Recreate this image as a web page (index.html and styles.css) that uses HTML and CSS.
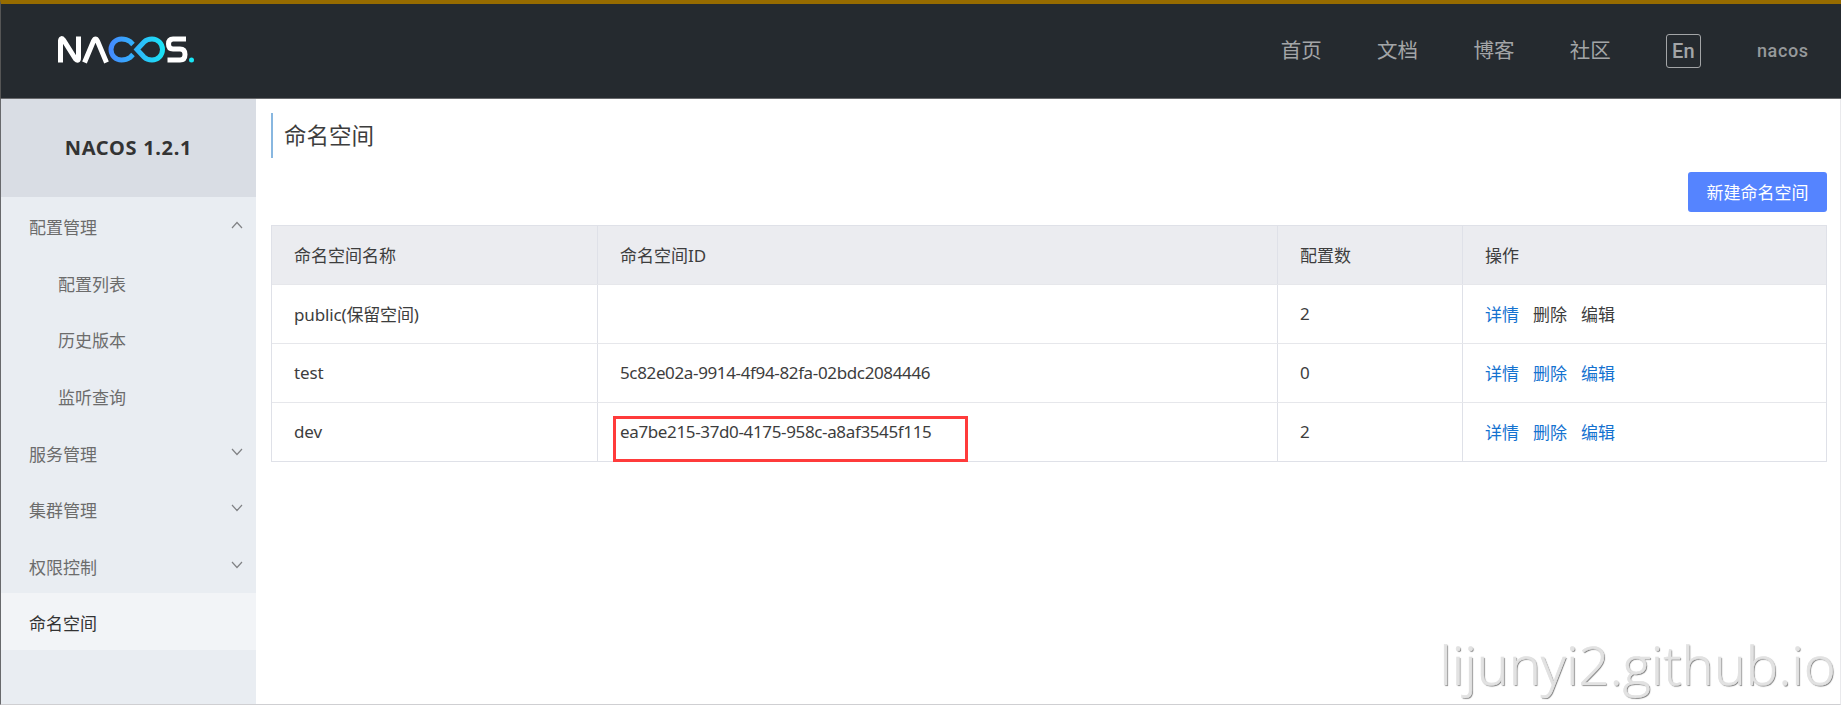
FILE: index.html
```html
<!DOCTYPE html>
<html lang="zh-CN">
<head>
<meta charset="utf-8">
<title>Nacos</title>
<link rel="stylesheet" href="styles.css">
</head>
<body>
<header class="header">
  <svg class="logo" width="138" height="28" viewBox="0 0 138 28" fill="none">
    <defs><linearGradient id="g" x1="50" y1="0" x2="107" y2="0" gradientUnits="userSpaceOnUse"><stop stop-color="#4687ff"/><stop offset="1" stop-color="#19e5f5"/></linearGradient></defs>
    <g stroke="#fff" stroke-width="5">
      <path d="M2.500 26.500V4.500Q3 1 5.500 4L17.500 23Q20.500 26 20.500 22V.500"/>
      <path d="M26.500 26.500L35.500 5Q37.500 1 39.500 5L48.500 26.500"/>
      <path d="M128 3H115Q110.500 3 110.500 8T115 13H122Q127 13 127 18.500T122 24H109.500"/>
    </g>
    <path stroke="url(#g)" stroke-width="5" d="M75 8.500L72 5.500Q68.500 3 63.500 3A10.500 10.500 0 0 0 63.500 24Q68.500 24 72 21.500L75 18.500"/>
    <path stroke="url(#g)" stroke-width="5" d="M79 13.500L86 6Q89 3 94 3A10.500 10.500 0 0 1 94 24Q89 24 86 21Z"/>
    <circle cx="133.500" cy="24" r="2.500" fill="#19e5f5"/>
  </svg>
  <nav class="nav">
    <a>首页</a><a>文档</a><a>博客</a><a>社区</a><span class="lang">En</span><span class="user">nacos</span>
  </nav>
</header>
<div class="body">
  <aside class="side">
    <div class="product">NACOS 1.2.1</div>
    <ul class="menu">
      <li>配置管理<svg class="arrow" viewBox="0 0 12 8"><path d="M1 7L6 1.500L11 7"/></svg></li>
      <li class="sub">配置列表</li>
      <li class="sub">历史版本</li>
      <li class="sub">监听查询</li>
      <li>服务管理<svg class="arrow" viewBox="0 0 12 8"><path d="M1 1L6 6.500L11 1"/></svg></li>
      <li>集群管理<svg class="arrow" viewBox="0 0 12 8"><path d="M1 1L6 6.500L11 1"/></svg></li>
      <li>权限控制<svg class="arrow" viewBox="0 0 12 8"><path d="M1 1L6 6.500L11 1"/></svg></li>
      <li class="active">命名空间</li>
    </ul>
  </aside>
  <main class="main">
    <h1 class="title">命名空间</h1>
    <div class="actions"><button class="create">新建命名空间</button></div>
    <div class="table">
      <div class="row head"><div>命名空间名称</div><div>命名空间ID</div><div>配置数</div><div>操作</div></div>
      <div class="row"><div class="name">public(保留空间)</div><div></div><div>2</div><div class="ops"><a>详情</a><span>删除</span><span>编辑</span></div></div>
      <div class="row"><div class="name">test</div><div><span class="id">5c82e02a-9914-4f94-82fa-02bdc2084446</span></div><div>0</div><div class="ops"><a>详情</a><a>删除</a><a>编辑</a></div></div>
      <div class="row"><div class="name">dev</div><div class="marked"><span class="id">ea7be215-37d0-4175-958c-a8af3545f115</span></div><div>2</div><div class="ops"><a>详情</a><a>删除</a><a>编辑</a></div></div>
    </div>
  </main>
</div>
<div class="watermark">lijunyi2.github.io</div>
</body>
</html>
```
FILE: styles.css
```css
*, *::after { box-sizing: border-box; }
body { margin: 0; height: 708px; overflow: hidden; background: #fff; color: #3d3d3d; font: 17px "Noto Sans", "Noto Sans CJK SC", sans-serif; }
.header { height: 99px; width: 1841px; border-top: 4px solid #966b00; border-bottom: 1px solid #68696c; border-left: 1px solid #555; background: #252a2f; display: flex; justify-content: space-between; padding: 0 33px 0 57px; }
.logo { margin-top: 32px; }
.nav { display: flex; align-items: center; height: 93px; color: #a3a5a7; font-size: 20.500px; }
.nav a { width: 41px; margin-right: 55.300px; white-space: nowrap; padding-bottom: 3px; }
.lang { width: 35px; height: 34px; border: 1px solid #a3a5a7; border-radius: 3px; margin-right: 56px; font: 500 20px/32px Roboto, sans-serif; letter-spacing: .3px; text-align: center; }
.user { font: 500 18px Roboto, sans-serif; letter-spacing: .6px; width: 51px; color: #96999b; padding-bottom: 1px; }
.body { display: flex; width: 1841px; height: 606px; border-left: 1px solid #68696c; border-right: 1px solid #e9e9ec; border-bottom: 1px solid #cfcfd2; }
.side { width: 255px; background: #e9edf2; }
.product { height: 98px; background: #d9dde4; font: bold 20px/98px "Noto Sans", sans-serif; letter-spacing: .7px; text-align: center; color: #333; }
.menu { list-style: none; margin: 0; padding: 0; color: #6c6c6c; }
.menu li { height: 56.600px; padding: 3px 13px 0 28px; display: flex; align-items: center; justify-content: space-between; }
.menu .sub { padding-left: 57px; }
.menu .active { background: #f2f4f7; color: #333; }
.arrow { width: 12px; height: 8px; fill: none; stroke: #808285; stroke-width: 1.200; margin-top: -3px; }
.main { flex: 1; padding: 14px 13px 0 15px; }
.title { margin: 0; height: 45px; border-left: 2px solid #88b7e0; padding-left: 11px; font-size: 22.500px; font-weight: 400; line-height: 45px; }
.actions { display: flex; justify-content: flex-end; margin-top: 14px; }
.create { width: 139px; height: 40px; border: 0; border-radius: 3px; padding: 0 0 2px; background: #5584ff; color: #fff; font: inherit; }
.table { margin-top: 13px; border: 1px solid #dfe1e8; }
.row { display: grid; grid-template-columns: 326px 680px 185px 1fr; height: 59px; border-bottom: 1px solid #e6e7eb; }
.row:last-child { border-bottom: 0; height: 58px; }
.row > div { display: flex; align-items: center; padding: 0 0 2px 22px; border-right: 1px solid #dfe1e8; white-space: nowrap; }
.row > div:last-child { border-right: 0; }
.head { background: #ebecf0; }
.name { letter-spacing: -.15px; }
.id { letter-spacing: -.36px; }
.ops { gap: 14px; }
.ops a { color: #1472d0; }
.marked { position: relative; }
.marked::after { content: ""; position: absolute; left: 15px; top: 13px; width: 355px; height: 46px; border: 3px solid #ff3b3b; }
.watermark { position: absolute; right: 7px; bottom: 6px; font: 300 54px/76px "Open Sans", sans-serif; letter-spacing: .25px; color: #e2e2e2; -webkit-text-stroke: .7px #e2e2e2; text-shadow: 1px 1px 1px #777; }
```
